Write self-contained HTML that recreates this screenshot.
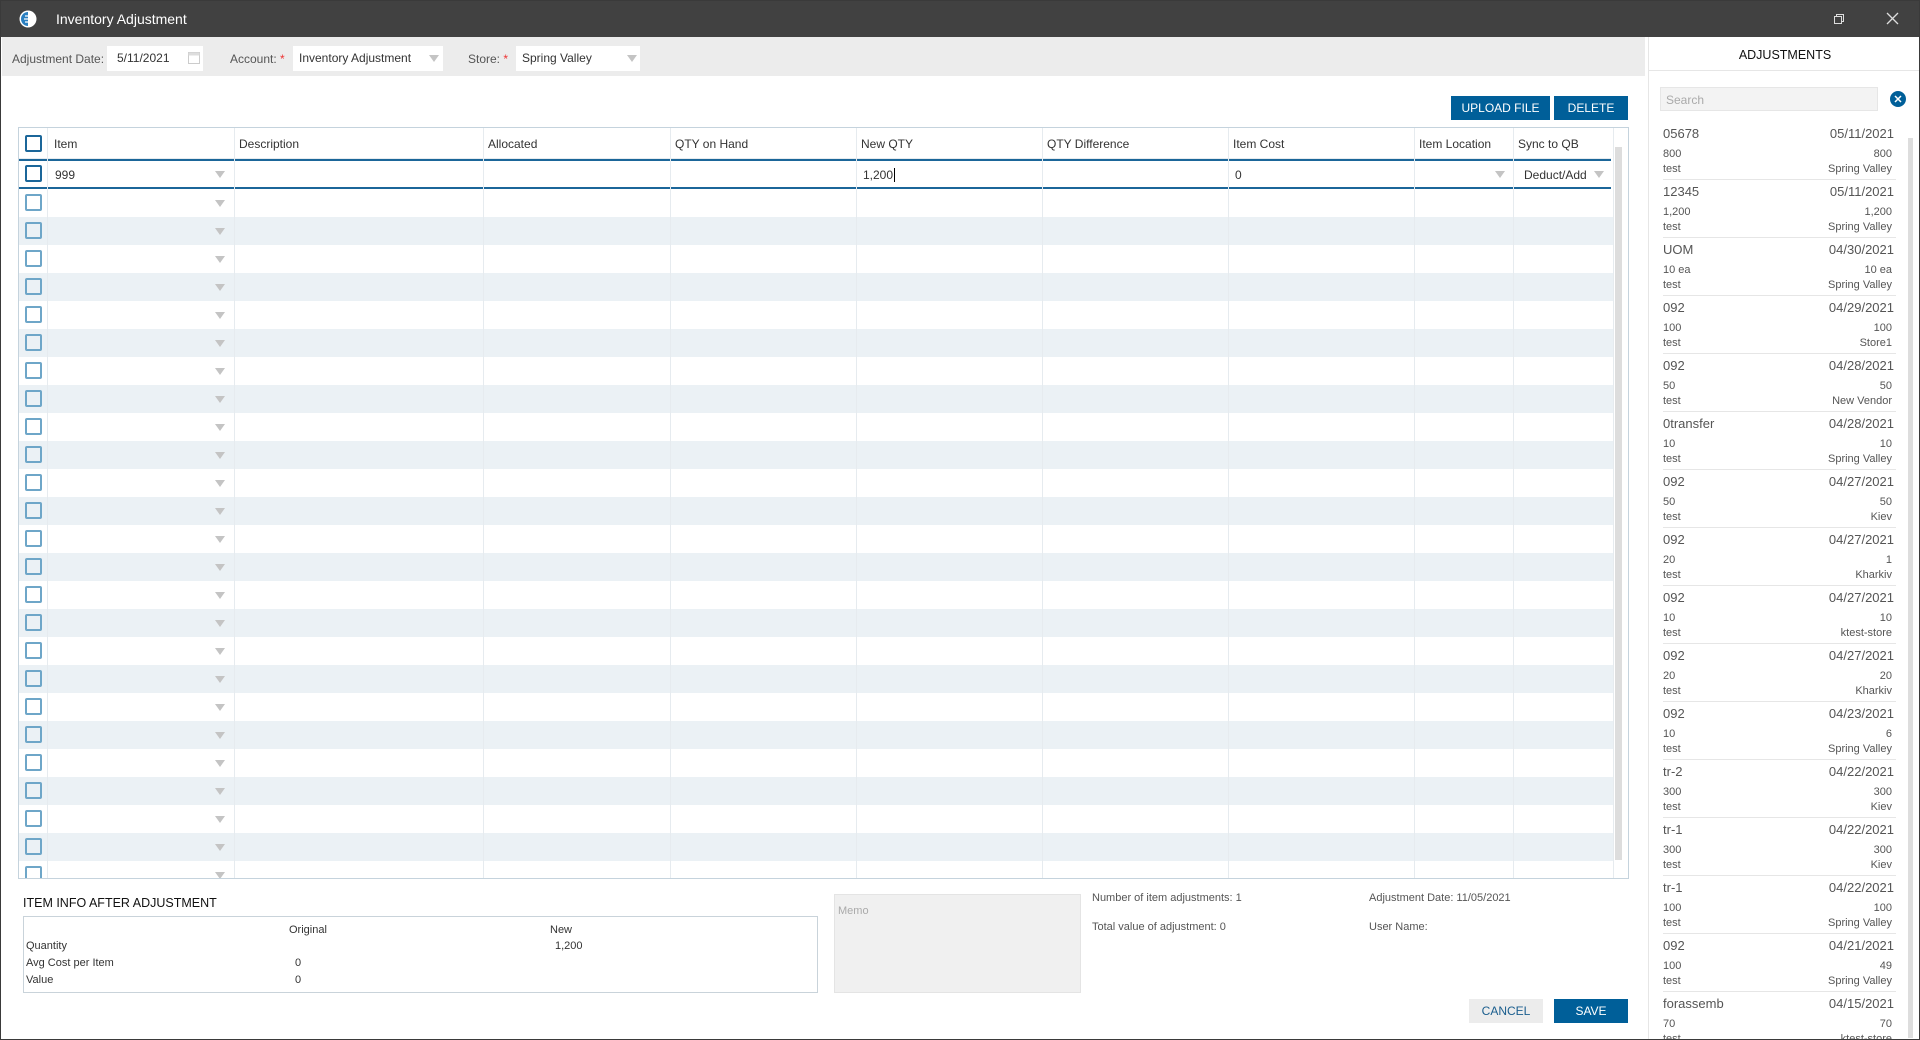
<!DOCTYPE html>
<html><head><meta charset="utf-8"><style>
*{box-sizing:border-box;margin:0;padding:0}
html,body{width:1920px;height:1040px;overflow:hidden}
body{font-family:"Liberation Sans",sans-serif;font-size:12px;color:#333;background:#fff}
#wrap{position:relative;width:1920px;height:1040px;overflow:hidden;border:1px solid #3a3a3a}
.a{position:absolute;white-space:nowrap}
.title{left:0;top:0;width:1920px;height:36px;background:#414141;color:#fff;font-size:14px}
.tb{left:1px;top:36px;width:1643px;height:39px;background:#ececec}
.inp{background:#fff;height:25px;top:45px;padding:5px 6px;font-size:12px}
.tri{width:0;height:0;border-left:5px solid transparent;border-right:5px solid transparent;border-top:7px solid #c4c4c4}
.btn{background:#005f99;color:#fff;font-size:12px;text-align:center;line-height:24px;height:24px}
.cb{width:17px;height:17px;border:2px solid #6ea6c8;border-radius:2px}
.vl{width:1px;background:#e6ebef}
.muted{color:#555}
</style></head><body><div id="wrap">
<div class="a title">
 <svg class="a" style="left:18px;top:9px" width="18" height="18" viewBox="0 0 18 18"><circle cx="9" cy="9" r="8.5" fill="#fff"/><path d="M9 2a7 7 0 0 0 0 14z" fill="#2a7fc0"/><path d="M6 6h6M5 9h7M6 12h6" stroke="#fff" stroke-width="1.3"/></svg>
 <span class="a" style="left:55px;top:10px">Inventory Adjustment</span>
 <svg class="a" style="left:1832px;top:12px" width="12" height="12"><rect x="1.5" y="3.5" width="7" height="7" fill="none" stroke="#ddd"/><path d="M3.5 3.5V1.5h7v7h-2" fill="none" stroke="#ddd"/></svg>
 <svg class="a" style="left:1885px;top:11px" width="13" height="13"><path d="M1 1l11 11M12 1L1 12" stroke="#ddd" stroke-width="1.3"/></svg>
</div>
<div class="a tb"></div>
<span class="a muted" style="left:11px;top:51px">Adjustment Date:</span>
<div class="a inp" style="left:106px;width:96px;padding-left:10px">5/11/2021</div>
<svg class="a" style="left:187px;top:49px" width="12" height="14"><rect x="0.5" y="2.5" width="11" height="11" fill="none" stroke="#ccc"/><rect x="0.5" y="2.5" width="11" height="3" fill="#ddd"/></svg>
<span class="a muted" style="left:229px;top:51px">Account: <span style="color:#e33">*</span></span>
<div class="a inp" style="left:292px;width:150px">Inventory Adjustment</div><div class="a tri" style="left:428px;top:54px"></div>
<span class="a muted" style="left:467px;top:51px">Store: <span style="color:#e33">*</span></span>
<div class="a inp" style="left:515px;width:124px">Spring Valley</div><div class="a tri" style="left:626px;top:54px"></div>

<div class="a btn" style="left:1450px;top:95px;width:99px">UPLOAD FILE</div>
<div class="a btn" style="left:1553px;top:95px;width:74px">DELETE</div>

<div class="a" style="left:17px;top:126px;width:1611px;height:752px;border:1px solid #c5d3dd;overflow:hidden">
<div style="position:relative;width:1609px;height:750px">
 <div class="a" style="left:0;top:0;width:1592px;height:31px;border-bottom:1px solid #e6ebef"></div>
 <div class="a" style="left:0;top:31px;width:1592px;height:30px;border-top:2px solid #1b6699;border-bottom:2px solid #1b6699"></div>
 <div id="rows"></div>
 <div class="a" style="left:1596px;top:19px;width:7px;height:713px;background:#ddd"></div>
</div></div>

<div class="a" style="left:22px;top:895px;font-size:12.5px;color:#111">ITEM INFO AFTER ADJUSTMENT</div>
<div class="a" style="left:22px;top:915px;width:795px;height:77px;border:1px solid #c9d3da"></div>
<span class="a" style="left:288px;top:923px;font-size:11px">Original</span>
<span class="a" style="left:549px;top:923px;font-size:11px">New</span>
<span class="a" style="left:25px;top:939px;font-size:11px">Quantity</span>
<span class="a" style="left:554px;top:939px;font-size:11px">1,200</span>
<span class="a" style="left:25px;top:956px;font-size:11px">Avg Cost per Item</span>
<span class="a" style="left:294px;top:956px;font-size:11px">0</span>
<span class="a" style="left:25px;top:973px;font-size:11px">Value</span>
<span class="a" style="left:294px;top:973px;font-size:11px">0</span>
<div class="a" style="left:833px;top:893px;width:247px;height:99px;background:#f0f0f0;border:1px solid #e4e4e4;color:#aaa;padding:10px 3px;font-size:11px">Memo</div>
<span class="a muted" style="left:1091px;top:891px;font-size:11px">Number of item adjustments: 1</span>
<span class="a muted" style="left:1091px;top:920px;font-size:11px">Total value of adjustment: 0</span>
<span class="a muted" style="left:1368px;top:891px;font-size:11px">Adjustment Date: 11/05/2021</span>
<span class="a muted" style="left:1368px;top:920px;font-size:11px">User Name:</span>
<div class="a" style="left:1468px;top:998px;width:74px;height:24px;background:#ececec;color:#1a5e8e;text-align:center;line-height:24px">CANCEL</div>
<div class="a btn" style="left:1553px;top:998px;width:74px">SAVE</div>

<div class="a" style="left:1647px;top:36px;width:1px;height:1004px;background:#e6e6e6"></div>
<div class="a" style="left:1648px;top:69px;width:272px;height:1px;background:#e6e6e6"></div>
<div class="a" style="left:1648px;top:47px;width:272px;text-align:center;font-size:12.5px;color:#111">ADJUSTMENTS</div>
<div class="a" style="left:1659px;top:86px;width:218px;height:24px;background:#f3f3f3;border:1px solid #e6e6e6;color:#aaa;padding:5px 5px;font-size:12px">Search</div>
<svg class="a" style="left:1889px;top:90px" width="16" height="16"><circle cx="8" cy="8" r="8" fill="#005f99"/><path d="M5 5l6 6M11 5l-6 6" stroke="#fff" stroke-width="1.5"/></svg>
<div class="a" style="left:1907px;top:137px;width:5px;height:900px;background:#ddd"></div>
<div id="list"></div>
</div>
<script>
var cols=[28,215,464,651,837,1023,1209,1395,1494,1594];
var h='';
var hd=[[35,'Item'],[220,'Description'],[469,'Allocated'],[656,'QTY on Hand'],[842,'New QTY'],[1028,'QTY Difference'],[1214,'Item Cost'],[1400,'Item Location'],[1499,'Sync to QB']];
for(var i=0;i<25;i++){var y=61+i*28;if(i%2==1)h+='<div class="a" style="left:0;top:'+y+'px;width:1594px;height:28px;background:#ebf1f5"></div>';
h+='<div class="a cb" style="left:6px;top:'+(y+5)+'px"></div><div class="a tri" style="left:196px;top:'+(y+11)+'px"></div>';}
for(var c=0;c<cols.length;c++)h+='<div class="a vl" style="left:'+cols[c]+'px;top:0;height:750px"></div>';
hd.forEach(function(x){h+='<span class="a" style="left:'+x[0]+'px;top:9px">'+x[1]+'</span>'});
h+='<div class="a cb" style="left:6px;top:7px;border-color:#1b6699"></div><div class="a cb" style="left:6px;top:37px;border-color:#1b6699"></div>';
h+='<span class="a" style="left:36px;top:40px">999</span><div class="a tri" style="left:196px;top:43px"></div>';
h+='<span class="a" style="left:844px;top:40px">1,200<span style="border-left:1px solid #000;margin-left:1px"></span></span>';
h+='<span class="a" style="left:1216px;top:40px">0</span><div class="a tri" style="left:1476px;top:43px"></div>';
h+='<span class="a" style="left:1505px;top:40px">Deduct/Add</span><div class="a tri" style="left:1575px;top:43px"></div>';
document.getElementById('rows').innerHTML=h;
var L=[['05678','05/11/2021','800','800','Spring Valley'],['12345','05/11/2021','1,200','1,200','Spring Valley'],['UOM','04/30/2021','10 ea','10 ea','Spring Valley'],['092','04/29/2021','100','100','Store1'],['092','04/28/2021','50','50','New Vendor'],['0transfer','04/28/2021','10','10','Spring Valley'],['092','04/27/2021','50','50','Kiev'],['092','04/27/2021','20','1','Kharkiv'],['092','04/27/2021','10','10','ktest-store'],['092','04/27/2021','20','20','Kharkiv'],['092','04/23/2021','10','6','Spring Valley'],['tr-2','04/22/2021','300','300','Kiev'],['tr-1','04/22/2021','300','300','Kiev'],['tr-1','04/22/2021','100','100','Spring Valley'],['092','04/21/2021','100','49','Spring Valley'],['forassemb','04/15/2021','70','70','ktest-store']];
h='';
L.forEach(function(e,i){var y=125+i*58;
h+='<span class="a" style="left:1662px;top:'+y+'px;font-size:13px;color:#555">'+e[0]+'</span><span class="a" style="right:25px;top:'+y+'px;font-size:13px;color:#555">'+e[1]+'</span>';
h+='<span class="a" style="left:1662px;top:'+(y+22)+'px;font-size:11px;color:#555">'+e[2]+'</span><span class="a" style="right:27px;top:'+(y+22)+'px;font-size:11px;color:#555">'+e[3]+'</span>';
h+='<span class="a" style="left:1662px;top:'+(y+37)+'px;font-size:11px;color:#555">test</span><span class="a" style="right:27px;top:'+(y+37)+'px;font-size:11px;color:#555">'+e[4]+'</span>';
h+='<div class="a" style="left:1662px;top:'+(y+53)+'px;width:233px;height:1px;background:#e6e6e6"></div>';});
document.getElementById('list').innerHTML=h;
</script>
</body></html>
